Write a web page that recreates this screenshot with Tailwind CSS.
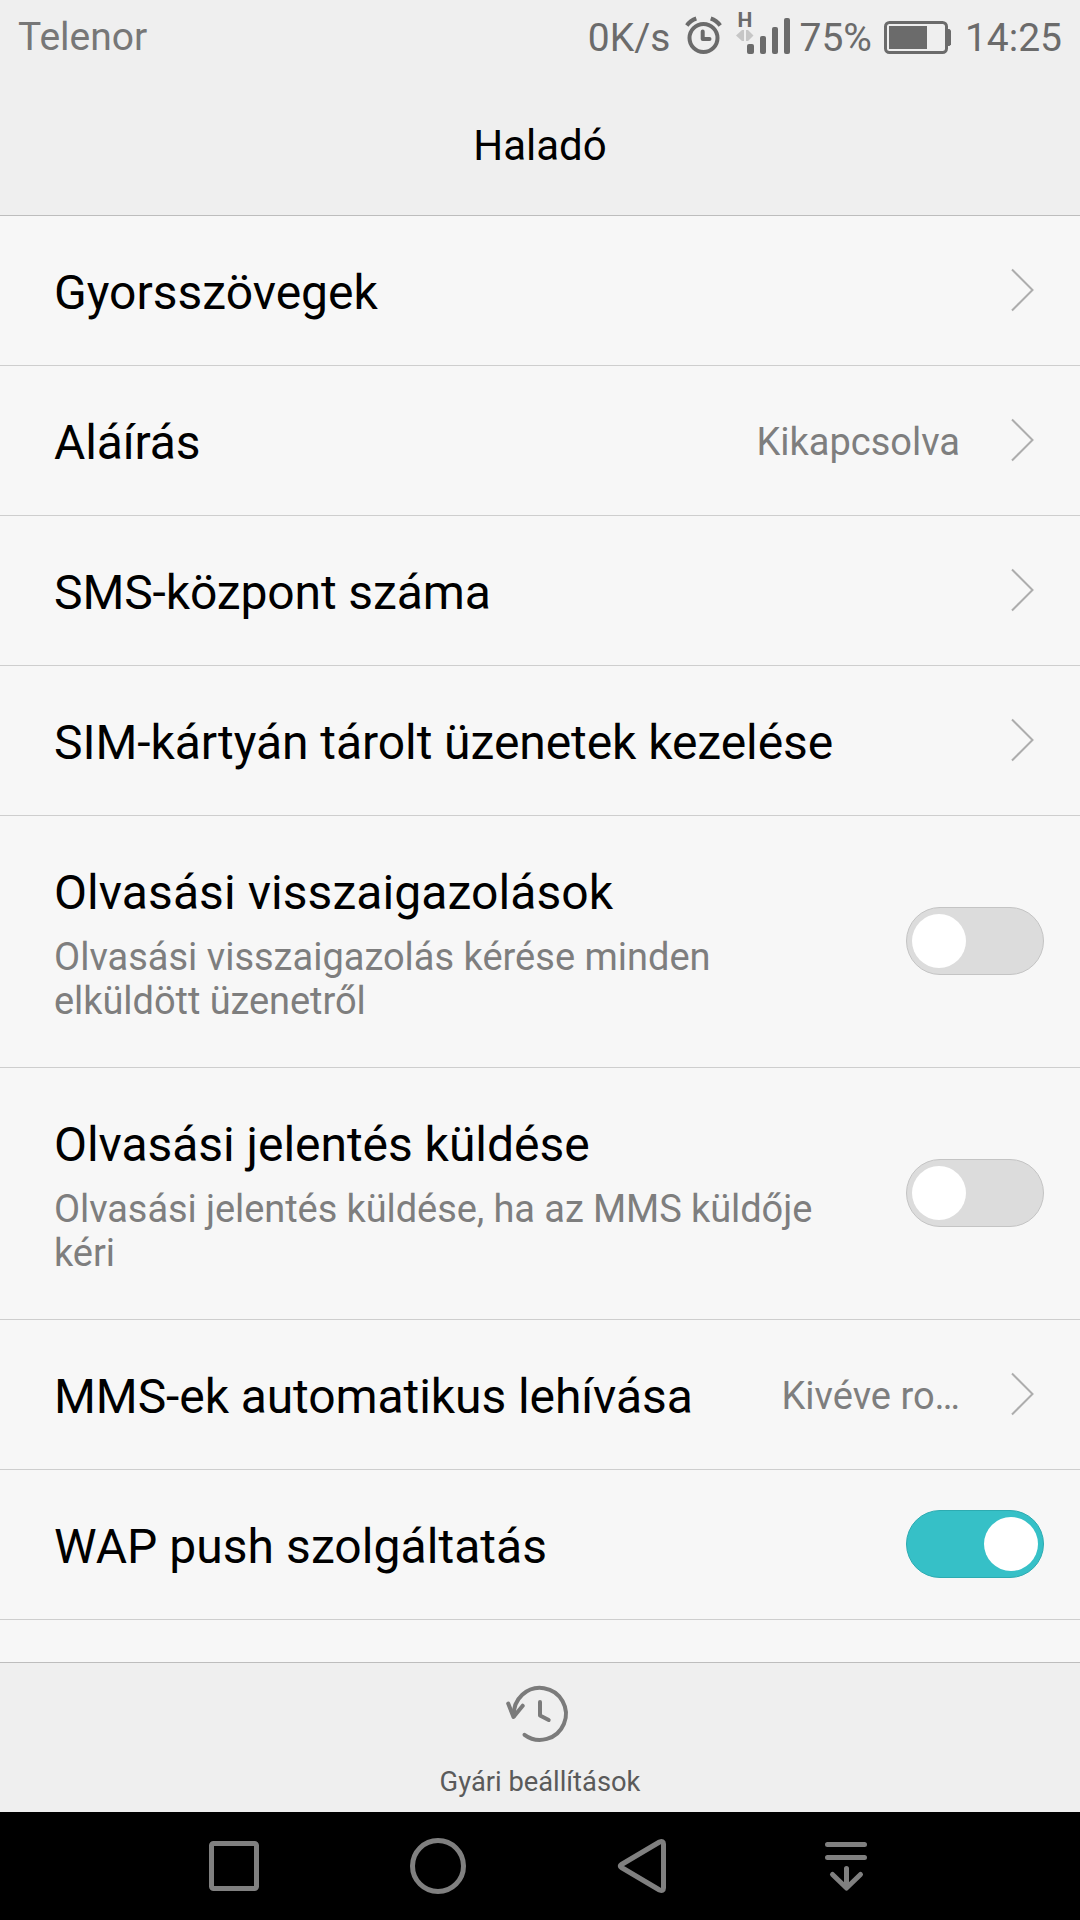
<!DOCTYPE html>
<html lang="hu">
  <head>
    <meta charset="UTF-8" />
    <meta name="viewport" content="width=device-width, initial-scale=1.0" />
    <script src="https://cdn.jsdelivr.net/npm/@tailwindcss/browser@4"></script>
    <title>Haladó</title>
  </head>
  <body class="bg-black">
    <div class="flex flex-col w-[1080px] h-[1920px] overflow-hidden bg-[#f7f7f7] font-['Roboto',sans-serif] text-black">
      <header class="h-[216px] shrink-0 bg-[#efefef] border-b border-[#bdbdbd]">
        <!-- Status bar -->
        <div class="flex justify-between h-[72px] px-[18px] text-[39px] leading-[74px] text-[#6b6b6b]">
          <span class="text-[#777777]">Telenor</span>
          <div class="flex">
            <span class="pt-px">0K/s</span>
            <svg class="ml-[15px] w-[37px] h-[72px]" viewBox="0 0 37 72" fill="none" stroke="#6b6b6b">
              <circle cx="18.5" cy="38" r="14" stroke-width="4" />
              <path d="M17.7 31.5v7.5h6.800" stroke-width="4" stroke-linecap="round" stroke-linejoin="round" />
              <path d="M1.8 25.5q3.5 -5 9.5 -7M35.2 25.5q-3.5 -5 -9.5 -7" stroke-width="4" />
            </svg>
            <div class="relative ml-[14px] w-[55px] h-[72px]">
              <svg class="w-[55px] h-[72px]" viewBox="0 0 55 72" fill="#6b6b6b">
                <path d="M0 35.5l6 -5.5h2v11h-2zM17.5 35.5l-5.5 -5.5h-2v11h2z" fill="#c6c6c6" />
                <rect x="11" y="44" width="7" height="10" rx="2" />
                <rect x="24" y="36" width="6" height="18" rx="2" />
                <rect x="36" y="27" width="6" height="27" rx="2" />
                <rect x="48" y="18" width="6" height="36" rx="2" />
              </svg>
              <span class="absolute left-[1px] top-[8px] text-[21px] leading-[25px] font-bold">H</span>
            </div>
            <span class="pt-px ml-[8px]">75%</span>
            <svg class="ml-[12px] w-[68px] h-[72px]" viewBox="0 0 68 72" fill="#6b6b6b">
              <rect x="1.5" y="22.5" width="61" height="30" rx="4" fill="none" stroke="#6b6b6b" stroke-width="3" />
              <rect x="5" y="26" width="38" height="23" />
              <path d="M64 29h1.500l1.500 1.500v14l-1.500 1.500h-1.500z" />
            </svg>
            <span class="pt-px ml-[13px]">14:25</span>
          </div>
        </div>
        <h1 class="pt-[2px] text-[42px] leading-[144px] text-center h-[143px]">Haladó</h1>
      </header>

      <!-- Settings list -->
      <main class="flex-1 min-h-0 overflow-hidden text-[48px]">
        <div class="flex items-center h-[150px] pl-[54px] pr-[46px] border-b border-[#cecece]">
          <span class="flex-1 pt-[5px]">Gyorsszövegek</span>
          <svg class="mb-[2px] w-[23px] h-[44px]" viewBox="0 0 23 44" fill="none" stroke="#adadad" stroke-width="2"><path d="M1 1.500L21.500 22L1 42.500" /></svg>
        </div>
        <div class="flex items-center h-[150px] pl-[54px] pr-[46px] border-b border-[#cecece]">
          <span class="flex-1 pt-[5px] tracking-[-0.1px]">Aláírás</span>
          <span class="pt-[4px] mr-[51px] text-[38px] text-[#7e7e7e]">Kikapcsolva</span>
          <svg class="mb-[2px] w-[23px] h-[44px]" viewBox="0 0 23 44" fill="none" stroke="#adadad" stroke-width="2"><path d="M1 1.500L21.500 22L1 42.500" /></svg>
        </div>
        <div class="flex items-center h-[150px] pl-[54px] pr-[46px] border-b border-[#cecece]">
          <span class="flex-1 pt-[5px] tracking-[-0.12px]">SMS-központ száma</span>
          <svg class="mb-[2px] w-[23px] h-[44px]" viewBox="0 0 23 44" fill="none" stroke="#adadad" stroke-width="2"><path d="M1 1.500L21.500 22L1 42.500" /></svg>
        </div>
        <div class="flex items-center h-[150px] pl-[54px] pr-[46px] border-b border-[#cecece]">
          <span class="flex-1 pt-[5px] tracking-[-0.07px]">SIM-kártyán tárolt üzenetek kezelése</span>
          <svg class="mb-[2px] w-[23px] h-[44px]" viewBox="0 0 23 44" fill="none" stroke="#adadad" stroke-width="2"><path d="M1 1.500L21.500 22L1 42.500" /></svg>
        </div>

        <!-- Read reports -->
        <div class="flex items-center justify-between h-[252px] pl-[54px] pr-[36px] border-b border-[#cecece]">
          <div class="w-[790px] pt-[3px]">
            <p class="leading-[60px] tracking-[0.08px]">Olvasási visszaigazolások</p>
            <p class="mt-[12px] text-[38px] leading-[44px] text-[#7e7e7e]">Olvasási visszaigazolás kérése minden<br /><span class="tracking-[-0.06px]">elküldött üzenetről</span></p>
          </div>
          <div class="flex items-center mb-px w-[138px] h-[68px] px-[5px] rounded-full bg-[#dcdcdc] border border-[#c4c4c4]">
            <div class="size-[54px] rounded-full bg-white"></div>
          </div>
        </div>
        <div class="flex items-center justify-between h-[252px] pl-[54px] pr-[36px] border-b border-[#cecece]">
          <div class="w-[790px] pt-[3px]">
            <p class="leading-[60px] tracking-[-0.04px]">Olvasási jelentés küldése</p>
            <p class="mt-[12px] text-[38px] leading-[44px] text-[#7e7e7e] tracking-[-0.08px]">Olvasási jelentés küldése, ha az MMS küldője<br />kéri</p>
          </div>
          <div class="flex items-center mb-px w-[138px] h-[68px] px-[5px] rounded-full bg-[#dcdcdc] border border-[#c4c4c4]">
            <div class="size-[54px] rounded-full bg-white"></div>
          </div>
        </div>

        <div class="flex items-center h-[150px] pl-[54px] pr-[46px] border-b border-[#cecece]">
          <span class="flex-1 pt-[5px] tracking-[-0.08px]">MMS-ek automatikus lehívása</span>
          <span class="pt-[4px] mr-[51px] text-[38px] text-[#7e7e7e]">Kivéve ro…</span>
          <svg class="mb-[2px] w-[23px] h-[44px]" viewBox="0 0 23 44" fill="none" stroke="#adadad" stroke-width="2"><path d="M1 1.500L21.500 22L1 42.500" /></svg>
        </div>
        <div class="flex items-center h-[150px] pl-[54px] pr-[36px] border-b border-[#cecece]">
          <span class="flex-1 pt-[5px] tracking-[0.05px]">WAP push szolgáltatás</span>
          <div class="flex items-center justify-end mb-px w-[138px] h-[68px] px-[5px] rounded-full bg-[#36c0c7] border border-[#2dabb1]">
            <div class="size-[54px] rounded-full bg-white"></div>
          </div>
        </div>
      </main>

      <!-- Toolbar -->
      <footer class="flex flex-col items-center h-[150px] shrink-0 bg-[#efefef] border-t border-[#bdbdbd]">
        <svg class="mt-[17px] w-[72px] h-[72px]" viewBox="0 0 72 72" fill="none" stroke="#7b7b7b" stroke-width="4" stroke-linecap="round" stroke-linejoin="round">
          <path d="M10 36A26 26 0 1 1 20.500 54.800" />
          <path d="M4.200 23.500L9.500 37L18.700 25.700" />
          <path d="M36 22v13.500l8.700 4.500" />
        </svg>
        <span class="mt-[12px] text-[27.3px] leading-[36px] text-[#5a5a5a]">Gyári beállítások</span>
      </footer>

      <!-- Navigation buttons -->
      <nav class="flex h-[108px] shrink-0 px-[132px] bg-black">
        <svg class="w-[204px] h-[108px]" viewBox="0 0 204 108" fill="none" stroke="#808080" stroke-width="5">
          <rect x="79.5" y="31.5" width="45" height="45" rx="2" />
        </svg>
        <svg class="w-[204px] h-[108px]" viewBox="0 0 204 108" fill="none" stroke="#808080" stroke-width="5">
          <circle cx="102" cy="54" r="25.5" />
        </svg>
        <svg class="w-[204px] h-[108px]" viewBox="0 0 204 108" fill="none" stroke="#808080" stroke-width="5" stroke-linejoin="round">
          <path d="M81.500 52.500L119.500 30Q123.500 28.500 123.500 32V76Q123.500 79.500 119.500 78L81.500 55.500Q79 54 81.500 52.500Z" />
        </svg>
        <svg class="w-[204px] h-[108px]" viewBox="0 0 204 108" fill="none" stroke="#808080" stroke-width="5" stroke-linecap="round" stroke-linejoin="round">
          <path d="M83.500 32.500h37M83.500 45.500h37M102.500 56.500v19M88.500 62.500l14 13.500l14 -13.500" />
        </svg>
      </nav>
    </div>
  </body>
</html>
